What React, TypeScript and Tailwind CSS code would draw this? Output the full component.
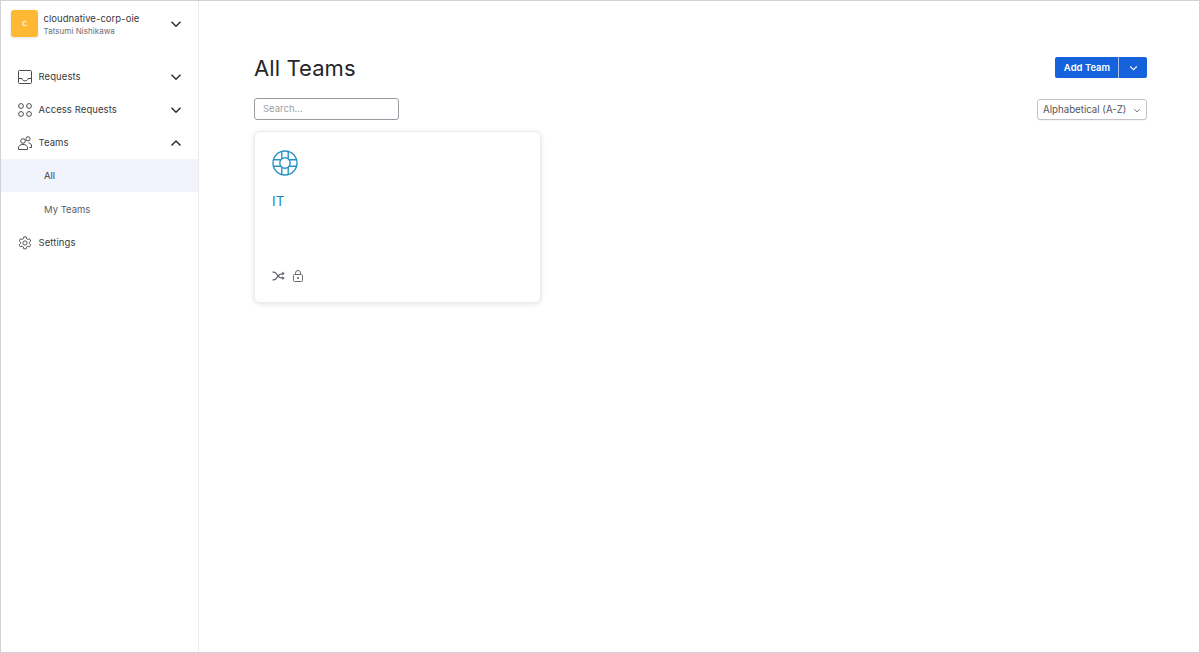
import React from "react";

const Chevron = ({ up = false, className = "" }: { up?: boolean; className?: string }) => (
  <svg width="12" height="8" viewBox="0 0 12 8" fill="none" className={className}>
    <path d={up ? "M1.5 6.5 6 2l4.5 4.5" : "M1.5 1.8 6 6.2l4.5-4.4"} stroke="currentColor" strokeWidth="1.5" />
  </svg>
);

const Inbox = () => (
  <svg width="14" height="14" viewBox="0 0 14 14" fill="none" stroke="#4b4b52" strokeWidth="1" className="w-[14px] h-[14px]">
    <rect x="0.5" y="0.5" width="13" height="13" rx="1" />
    <path d="M0.5 8.5H4c.3 1.6 1.4 2.4 3 2.4s2.7-.8 3-2.4h3.5" />
  </svg>
);

const Grid = () => (
  <svg width="14" height="14" viewBox="0 0 14 14" fill="none" stroke="#4b4b52" strokeWidth="1">
    <circle cx="3" cy="3" r="2.4" />
    <circle cx="11" cy="3" r="2.4" />
    <circle cx="3" cy="11" r="2.4" />
    <circle cx="11" cy="11" r="2.4" />
  </svg>
);

const People = () => (
  <svg width="14" height="14" viewBox="0 0 14 14" fill="none" stroke="#4b4b52" strokeWidth="1">
    <circle cx="5" cy="5" r="2.3" />
    <path d="M0.5 13.5v-1.7c0-2 1.8-3.4 4.5-3.4s4.5 1.4 4.5 3.4v1.7z" />
    <circle cx="10" cy="2.8" r="2.1" />
    <path d="M10.5 7c2 .1 3 1.2 3 3v1.5h-2" />
  </svg>
);

const Gear = () => (
  <svg width="14" height="14" viewBox="0 0 24 24" fill="none" stroke="#4b4b52" strokeWidth="1.6" strokeLinejoin="round">
    <path d="M9.9 1.5h4.2l.7 3.2 1.9 1.1 3.1-1 2.1 3.6-2.4 2.2v2.2l2.4 2.2-2.1 3.6-3.1-1-1.9 1.1-.7 3.3H9.9l-.7-3.3-1.9-1.1-3.1 1-2.1-3.6 2.4-2.2v-2.2L2.1 8.4l2.1-3.6 3.1 1 1.9-1.1z" />
    <circle cx="12" cy="12" r="3.6" />
  </svg>
);

const Lifebuoy = () => (
  <svg width="26" height="26" viewBox="0 0 26 26" fill="none" stroke="#2a93c4" strokeWidth="1.4">
    <circle cx="13" cy="13" r="12" />
    <circle cx="13" cy="13" r="5.2" />
    <path d="M9.8 1.6v7.4M16.2 1.6v7.4M9.8 17v7.4M16.2 17v7.4M1.6 9.8H9M1.6 16.2H9M17 9.8h7.4M17 16.2h7.4" />
  </svg>
);

const Shuffle = () => (
  <svg width="13" height="10" viewBox="0 0 13 10" fill="none" stroke="#5e5e66" strokeWidth="1.2">
    <path d="M0.5 1.2h1.3c1.2 0 1.9.5 2.7 1.6l2 2.6c.8 1.1 1.5 1.5 2.7 1.5h1.5" />
    <path d="M0.5 8.8h1.3c1.2 0 1.9-.5 2.7-1.6l2-2.6c.8-1.1 1.5-1.4 2.7-1.4h1.5" />
    <path d="M10.2 0.4l2.6 2.1-2.6 1.7zM10.2 5.2l2.6 1.7-2.6 2z" fill="#5e5e66" stroke="none" />
  </svg>
);

const Lock = () => (
  <svg width="10" height="12" viewBox="0 0 10 12" fill="none" stroke="#6a6a72" strokeWidth="1">
    <rect x="0.5" y="4.5" width="9" height="7" rx="1" />
    <path d="M2.5 4.5V3a2.5 2.5 0 0 1 5 0v1.5" />
    <path d="M5 7v2" strokeWidth="1.6" />
  </svg>
);

const NavRow = ({ icon, label, chevron }: { icon: React.ReactNode; label: string; chevron?: "up" | "down" }) => (
  <div className="h-[33px] flex items-center pl-[17px] pr-[16px]">
    <span className="w-[14px] h-[14px] flex items-center justify-center shrink-0">{icon}</span>
    <span className="ml-[6.5px] pt-[1px] text-[9.5px] leading-[14px] tracking-[0.08px] text-[#3a3a40] flex-1">{label}</span>
    {chevron && <Chevron up={chevron === "up"} className="text-[#2e2e33]" />}
  </div>
);

export default function App() {
  return (
    <div className="w-[1200px] h-[653px] flex bg-white border border-[#d2d2d6] overflow-hidden font-['Inter','Liberation_Sans',sans-serif]">
      <aside className="w-[198px] shrink-0 border-r border-[#ebebed] flex flex-col">
        <div className="h-[59px] flex items-center pl-[10px] pr-[16px]">
          <div className="w-[27px] h-[27px] mb-[15px] rounded-[3px] bg-[#ffb834] shadow-[0_1px_3px_rgba(0,0,0,0.12)] text-white text-[9px] flex items-center justify-center">
            c
          </div>
          <div className="ml-[5.5px] flex-1 mb-[13px] flex flex-col">
            <span className="text-[9.5px] leading-[14px] tracking-[0.05px] text-[#3a3a40]">cloudnative-corp-oie</span>
            <span className="text-[8.1px] leading-[11px] text-[#6e6e78]">Tatsumi Nishikawa</span>
          </div>
          <Chevron className="text-[#2e2e33] mb-[13px]" />
        </div>
        <nav className="flex flex-col">
          <NavRow icon={<Inbox />} label="Requests" chevron="down" />
          <NavRow icon={<Grid />} label="Access Requests" chevron="down" />
          <NavRow icon={<People />} label="Teams" chevron="up" />
          <div className="h-[33px] flex items-center pl-[43px] pt-[1px] bg-[#f2f4fd] text-[9.5px] leading-[14px] text-[#3a3a40]">All</div>
          <div className="h-[34px] flex items-center pl-[43px] pt-[1px] text-[9.5px] leading-[14px] text-[#5c5c64]">My Teams</div>
          <NavRow icon={<Gear />} label="Settings" />
        </nav>
      </aside>
      <main className="flex-1 pl-[55px] pr-[52px] pt-[52px]">
        <div className="flex items-center justify-between h-[30px]">
          <h1 className="text-[22px] leading-[30px] font-normal text-[#26262b] tracking-[0.1px]">All Teams</h1>
          <div className="flex h-[21px] w-[92px] mb-[1px] rounded-[2px] overflow-hidden bg-[#1662dd] text-white">
            <div className="w-[64px] pl-[1px] pt-[1px] flex items-center justify-center text-[9.5px] font-semibold border-r border-[#a9c4f0]">Add Team</div>
            <div className="flex-1 flex items-center justify-center">
              <Chevron className="w-[9px] h-[6px]" />
            </div>
          </div>
        </div>
        <div className="flex items-start justify-between mt-[15px] h-[22px]">
          <div className="w-[145px] h-[22px] rounded-[3px] border border-[#9a9aa3] flex items-center pl-[8px] pt-[1px] text-[9.5px] text-[#a0a0a8]">
            Search...
          </div>
          <div className="w-[110px] h-[21px] mt-[1px] pt-[1px] rounded-[3px] border border-[#c2c2c9] shadow-[0_1px_1px_rgba(0,0,0,0.05)] flex items-center justify-between pl-[5px] pr-[5px] text-[9.7px] text-[#55555c]">
            Alphabetical (A-Z)
            <Chevron className="w-[8px] h-[5px] text-[#6e6e78]" />
          </div>
        </div>
        <div className="mt-[11px] w-[287px] h-[172px] rounded-[6px] border border-[#ebebed] shadow-[0_1px_5px_rgba(0,0,0,0.12)] pl-[17px] pt-[18px] flex flex-col">
          <Lifebuoy />
          <div className="mt-[15px] text-[13.5px] leading-[20px] text-[#1f86bb]">IT</div>
          <div className="mt-auto mb-[20px] flex items-center gap-[8px]">
            <Shuffle />
            <Lock />
          </div>
        </div>
      </main>
    </div>
  );
}
